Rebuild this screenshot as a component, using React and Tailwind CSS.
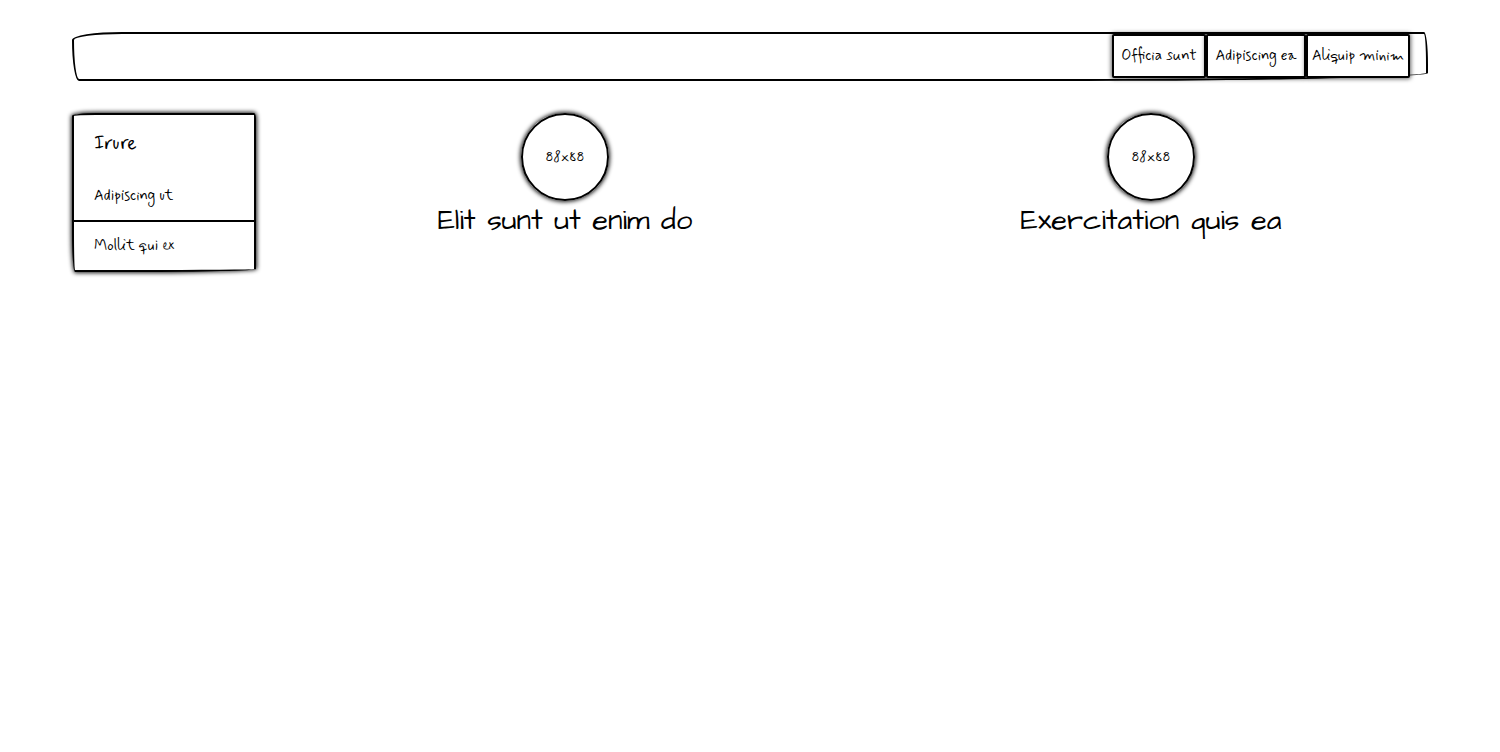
const navItems = [
  { label: 'Officia sunt', width: 'min-w-[94px]' },
  { label: 'Adipiscing ea', width: 'min-w-[100px]' },
  { label: 'Aliquip minim', width: 'min-w-[104px]' },
]

const profiles = ['Elit sunt ut enim do', 'Exercitation quis ea']

export default function App() {
  return (
    <div className="min-h-screen bg-white pt-8 pr-14 pl-[72px] font-['Mynerve','Architects_Daughter',cursive] text-[15px] leading-6 text-black">
      <header className="mr-4 flex justify-end rounded-[50px_4px_380px_7px/8px_32px_8px_41px] border-2 border-black pr-4 pb-px">
        <nav className="flex">
          {navItems.map((item) => (
            <button
              key={item.label}
              type="button"
              className={`${item.width} h-11 rounded-[2px] border-2 border-black bg-white text-center whitespace-nowrap shadow-[0_0_4px_1px_rgba(0,0,0,0.6)]`}
            >
              {item.label}
            </button>
          ))}
        </nav>
      </header>

      <div className="mt-8 flex items-start gap-4">
        <aside className="w-[184px] shrink-0 rounded-[24px_2px_120px_3px/3px_6px_3px_40px] border-2 border-black bg-white shadow-[0_0_4px_1px_rgba(0,0,0,0.9)]">
          <h2 className="px-5 pt-[15px] pb-[13px] text-xl leading-7">Irure</h2>
          <a href="#adipiscing" className="block border-b-2 border-black px-5 pt-[13px] pb-3">
            Adipiscing ut
          </a>
          <a href="#mollit" className="block px-5 py-3">
            Mollit qui ex
          </a>
        </aside>

        <main className="grid flex-1 grid-cols-2">
          {profiles.map((name) => (
            <section key={name} className="flex flex-col items-center">
              <div className="flex size-[88px] items-center justify-center rounded-full border-2 border-black text-sm shadow-[0_0_4px_1px_rgba(0,0,0,0.9)]">
                88x88
              </div>
              <h1 className="font-['Architects_Daughter','Mynerve',cursive] text-[29px] leading-10 whitespace-nowrap">
                {name}
              </h1>
            </section>
          ))}
        </main>
      </div>
    </div>
  )
}
